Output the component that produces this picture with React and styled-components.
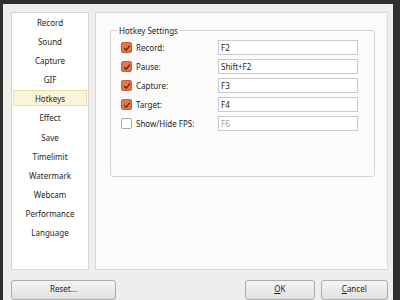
import React from "react";
import styled, { createGlobalStyle } from "styled-components";

const Global = createGlobalStyle`
  html, body { margin: 0; padding: 0; }
  body { width: 400px; height: 300px; overflow: hidden; background: #2b2b2b; font-family: "Noto Sans", "Open Sans", sans-serif; }
`;

const Frame = styled.div`
  box-sizing: border-box;
  width: 400px;
  height: 300px;
  padding: 4px 7px 0 3px;
  background: #303030;
`;

const Window = styled.div`
  box-sizing: border-box;
  height: 296px;
  background: #efeeed;
  display: flex;
  flex-direction: column;
  padding: 8px 5px 0 8px;
`;

const Body = styled.div`
  display: flex;
  gap: 6px;
  height: 262px;
`;

const Nav = styled.ul`
  box-sizing: border-box;
  width: 78px;
  margin: 0;
  padding: 1px 1px;
  list-style: none;
  background: #ffffff;
  border: 1px solid #d6d6d6;
  display: flex;
  flex-direction: column;
  gap: 3.1px;
`;

const NavItem = styled.li`
  height: 16px;
  line-height: 16px;
  font-size: 8px;
  text-align: center;
  color: #1e1e1e;
  box-sizing: border-box;
  border: 1px solid ${(p) => (p.$active ? "#ecdda8" : "transparent")};
  background: ${(p) => (p.$active ? "#fcf4d9" : "transparent")};
`;

const Panel = styled.div`
  box-sizing: border-box;
  flex: 1;
  background: #fbfbfb;
  border: 1px solid #dadada;
  padding: 12px 12px 0 14px;
`;

const Group = styled.fieldset`
  box-sizing: border-box;
  margin: 0;
  height: 152px;
  border: 1px solid #d4d4d4;
  border-radius: 3px;
  padding: 4px 16px 0 10px;
  display: flex;
  flex-direction: column;
  gap: 4px;
`;

const Legend = styled.legend`
  font-size: 8px;
  color: #1e1e1e;
  padding: 0 1px;
  margin-left: -3px;
`;

const Row = styled.div`
  display: flex;
  align-items: center;
  height: 15px;
`;

const Check = styled.span`
  box-sizing: border-box;
  width: 11px;
  height: 11px;
  border-radius: 2px;
  display: inline-flex;
  align-items: center;
  justify-content: center;
  margin-right: 4px;
  background: ${(p) => (p.$on ? "#e4774a" : "#ffffff")};
  border: 1px solid ${(p) => (p.$on ? "#c85f34" : "#a9a9a9")};
`;

const Label = styled.span`
  width: 82px;
  font-size: 8px;
  color: #1e1e1e;
`;

const Input = styled.div`
  box-sizing: border-box;
  flex: 1;
  height: 15px;
  border: 1px solid #c9c9c9;
  background: #fff;
  font-size: 8px;
  line-height: 13px;
  padding-left: 2px;
  color: ${(p) => (p.$disabled ? "#a0a0a0" : "#1e1e1e")};
`;

const Footer = styled.div`
  display: flex;
  margin-top: 10px;
  gap: 6px;
`;

const Button = styled.div`
  box-sizing: border-box;
  width: ${(p) => p.$w}px;
  height: 20px;
  border: 1px solid #acacac;
  border-radius: 3px;
  background: linear-gradient(#f4f4f4, #e2e2e2);
  font-size: 8px;
  text-align: center;
  line-height: 15px;
  color: #1e1e1e;
  margin-left: ${(p) => p.$ml || 0}px;
  u { text-decoration: underline; }
`;

const Tick = () => (
  <svg width="8" height="8" viewBox="0 0 8 8">
    <path d="M1.2 4.2 L3.2 6.2 L6.8 1.6" fill="none" stroke="#5a2a14" strokeWidth="1.3" />
  </svg>
);

const nav = ["Record", "Sound", "Capture", "GIF", "Hotkeys", "Effect", "Save", "Timelimit", "Watermark", "Webcam", "Performance", "Language"];

const rows = [
  { label: "Record:", value: "F2", on: true },
  { label: "Pause:", value: "Shift+F2", on: true },
  { label: "Capture:", value: "F3", on: true },
  { label: "Target:", value: "F4", on: true },
  { label: "Show/Hide FPS:", value: "F6", on: false },
];

export default function App() {
  return (
    <>
      <Global />
      <Frame>
        <Window>
          <Body>
            <Nav>
              {nav.map((n) => (
                <NavItem key={n} $active={n === "Hotkeys"}>{n}</NavItem>
              ))}
            </Nav>
            <Panel>
              <Group>
                <Legend>Hotkey Settings</Legend>
                {rows.map((r) => (
                  <Row key={r.label}>
                    <Check $on={r.on}>{r.on && <Tick />}</Check>
                    <Label>{r.label}</Label>
                    <Input $disabled={!r.on}>{r.value}</Input>
                  </Row>
                ))}
              </Group>
            </Panel>
          </Body>
          <Footer>
            <Button $w={106}>Reset...</Button>
            <Button $w={70} $ml={123}><u>O</u>K</Button>
            <Button $w={68}><u>C</u>ancel</Button>
          </Footer>
        </Window>
      </Frame>
    </>
  );
}
